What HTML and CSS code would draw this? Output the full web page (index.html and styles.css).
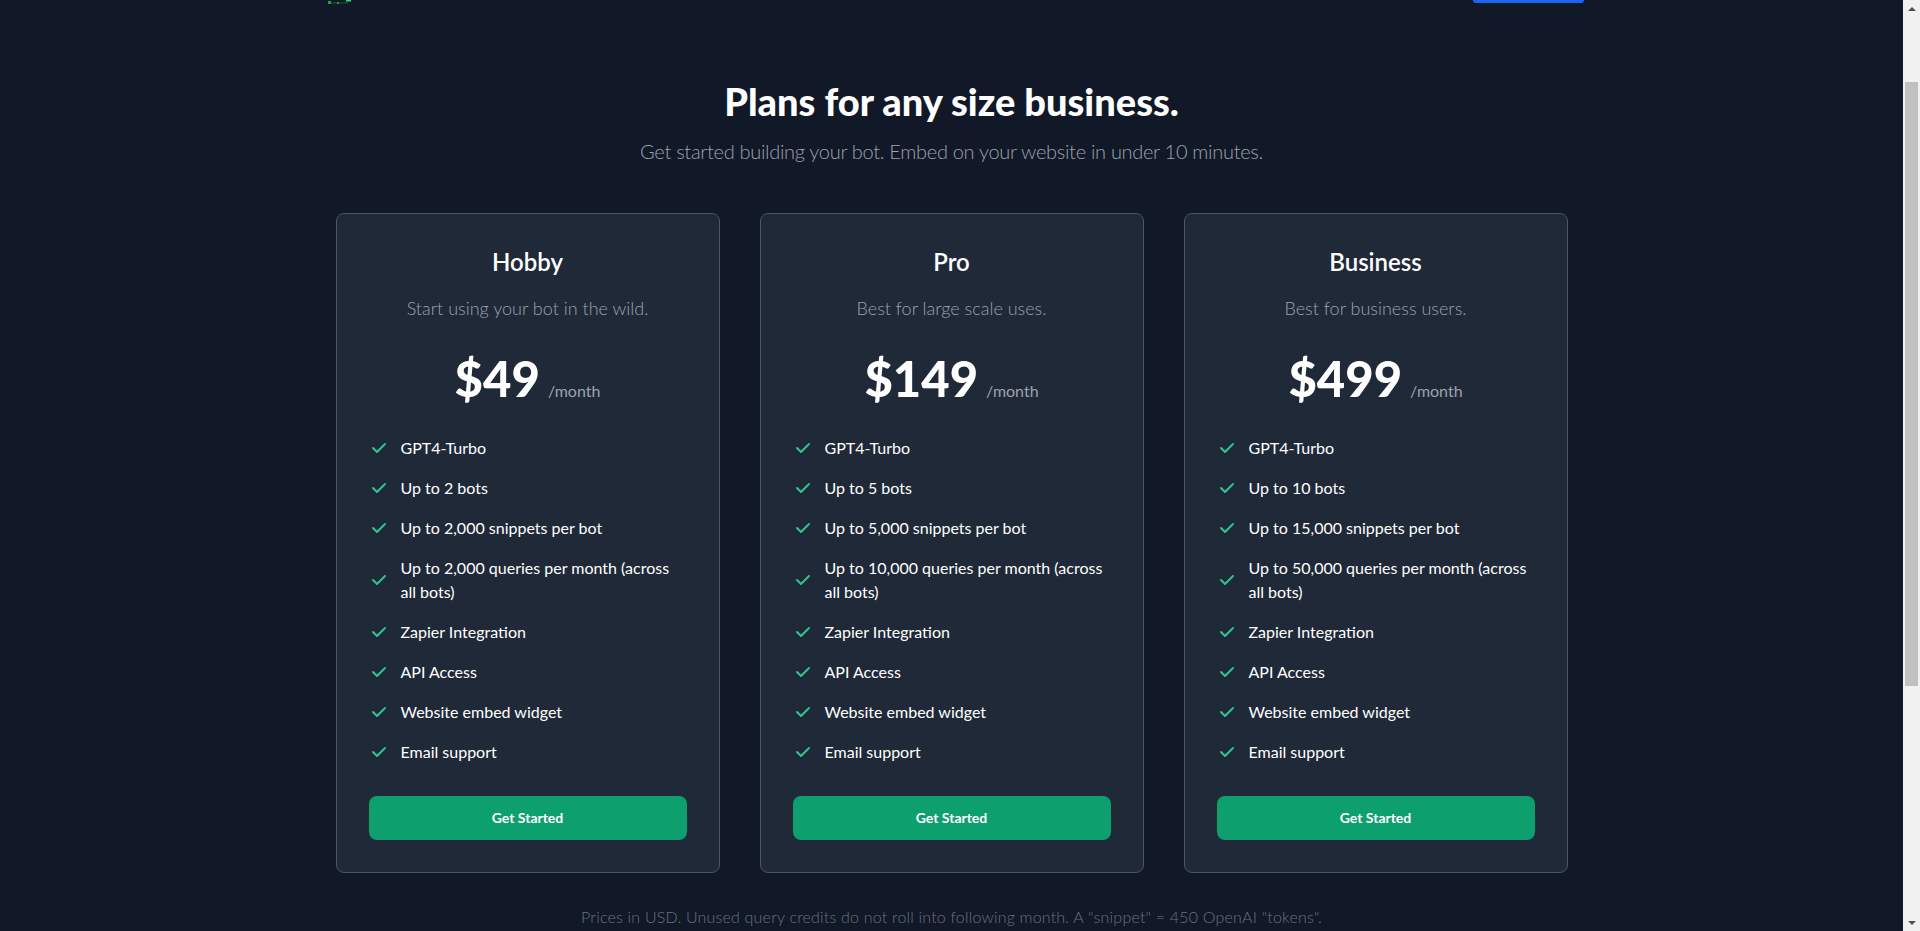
FILE: index.html
```html
<!DOCTYPE html>
<html lang="en">
<head>
<meta charset="utf-8">
<title>Pricing</title>
<link rel="stylesheet" href="styles.css">
</head>
<body>
<div class="page">
  <div class="viewport">
    <div class="topstrip">
      <svg class="logo-frag" width="26" height="5" viewBox="0 0 26 5">
        <rect x="0" y="1" width="3" height="3" fill="#16a34a"/>
        <path d="M3 3 L20 3" stroke="#1f5f3a" stroke-width="1"/>
        <rect x="9" y="2" width="2" height="2" fill="#2f8f4f"/>
        <rect x="18" y="0" width="5" height="1.5" fill="#22e06b"/>
      </svg>
      <div class="cta-frag"></div>
    </div>

    <section class="pricing">
      <div class="pricing-head">
        <h2 class="pricing-title">Plans for any size business.</h2>
        <p class="pricing-sub">Get started building your bot. Embed on your website in under 10 minutes.</p>
      </div>

      <div class="plans">
        <div class="plan">
          <h3 class="plan-name">Hobby</h3>
          <p class="plan-desc">Start using your bot in the wild.</p>
          <div class="plan-price"><span class="amount">$49</span><span class="per">/month</span></div>
          <ul class="features">
            <li><svg class="check" viewBox="0 0 20 20"><path fill-rule="evenodd" clip-rule="evenodd" d="M16.707 5.293a1 1 0 010 1.414l-8 8a1 1 0 01-1.414 0l-4-4a1 1 0 011.414-1.414L8 12.586l7.293-7.293a1 1 0 011.414 0z"/></svg><span>GPT4-Turbo</span></li>
            <li><svg class="check" viewBox="0 0 20 20"><path fill-rule="evenodd" clip-rule="evenodd" d="M16.707 5.293a1 1 0 010 1.414l-8 8a1 1 0 01-1.414 0l-4-4a1 1 0 011.414-1.414L8 12.586l7.293-7.293a1 1 0 011.414 0z"/></svg><span>Up to 2 bots</span></li>
            <li><svg class="check" viewBox="0 0 20 20"><path fill-rule="evenodd" clip-rule="evenodd" d="M16.707 5.293a1 1 0 010 1.414l-8 8a1 1 0 01-1.414 0l-4-4a1 1 0 011.414-1.414L8 12.586l7.293-7.293a1 1 0 011.414 0z"/></svg><span>Up to 2,000 snippets per bot</span></li>
            <li><svg class="check" viewBox="0 0 20 20"><path fill-rule="evenodd" clip-rule="evenodd" d="M16.707 5.293a1 1 0 010 1.414l-8 8a1 1 0 01-1.414 0l-4-4a1 1 0 011.414-1.414L8 12.586l7.293-7.293a1 1 0 011.414 0z"/></svg><span>Up to 2,000 queries per month (across all bots)</span></li>
            <li><svg class="check" viewBox="0 0 20 20"><path fill-rule="evenodd" clip-rule="evenodd" d="M16.707 5.293a1 1 0 010 1.414l-8 8a1 1 0 01-1.414 0l-4-4a1 1 0 011.414-1.414L8 12.586l7.293-7.293a1 1 0 011.414 0z"/></svg><span>Zapier Integration</span></li>
            <li><svg class="check" viewBox="0 0 20 20"><path fill-rule="evenodd" clip-rule="evenodd" d="M16.707 5.293a1 1 0 010 1.414l-8 8a1 1 0 01-1.414 0l-4-4a1 1 0 011.414-1.414L8 12.586l7.293-7.293a1 1 0 011.414 0z"/></svg><span>API Access</span></li>
            <li><svg class="check" viewBox="0 0 20 20"><path fill-rule="evenodd" clip-rule="evenodd" d="M16.707 5.293a1 1 0 010 1.414l-8 8a1 1 0 01-1.414 0l-4-4a1 1 0 011.414-1.414L8 12.586l7.293-7.293a1 1 0 011.414 0z"/></svg><span>Website embed widget</span></li>
            <li><svg class="check" viewBox="0 0 20 20"><path fill-rule="evenodd" clip-rule="evenodd" d="M16.707 5.293a1 1 0 010 1.414l-8 8a1 1 0 01-1.414 0l-4-4a1 1 0 011.414-1.414L8 12.586l7.293-7.293a1 1 0 011.414 0z"/></svg><span>Email support</span></li>
          </ul>
          <a class="plan-btn" href="#">Get Started</a>
        </div>

        <div class="plan">
          <h3 class="plan-name">Pro</h3>
          <p class="plan-desc">Best for large scale uses.</p>
          <div class="plan-price"><span class="amount">$149</span><span class="per">/month</span></div>
          <ul class="features">
            <li><svg class="check" viewBox="0 0 20 20"><path fill-rule="evenodd" clip-rule="evenodd" d="M16.707 5.293a1 1 0 010 1.414l-8 8a1 1 0 01-1.414 0l-4-4a1 1 0 011.414-1.414L8 12.586l7.293-7.293a1 1 0 011.414 0z"/></svg><span>GPT4-Turbo</span></li>
            <li><svg class="check" viewBox="0 0 20 20"><path fill-rule="evenodd" clip-rule="evenodd" d="M16.707 5.293a1 1 0 010 1.414l-8 8a1 1 0 01-1.414 0l-4-4a1 1 0 011.414-1.414L8 12.586l7.293-7.293a1 1 0 011.414 0z"/></svg><span>Up to 5 bots</span></li>
            <li><svg class="check" viewBox="0 0 20 20"><path fill-rule="evenodd" clip-rule="evenodd" d="M16.707 5.293a1 1 0 010 1.414l-8 8a1 1 0 01-1.414 0l-4-4a1 1 0 011.414-1.414L8 12.586l7.293-7.293a1 1 0 011.414 0z"/></svg><span>Up to 5,000 snippets per bot</span></li>
            <li><svg class="check" viewBox="0 0 20 20"><path fill-rule="evenodd" clip-rule="evenodd" d="M16.707 5.293a1 1 0 010 1.414l-8 8a1 1 0 01-1.414 0l-4-4a1 1 0 011.414-1.414L8 12.586l7.293-7.293a1 1 0 011.414 0z"/></svg><span>Up to 10,000 queries per month (across all bots)</span></li>
            <li><svg class="check" viewBox="0 0 20 20"><path fill-rule="evenodd" clip-rule="evenodd" d="M16.707 5.293a1 1 0 010 1.414l-8 8a1 1 0 01-1.414 0l-4-4a1 1 0 011.414-1.414L8 12.586l7.293-7.293a1 1 0 011.414 0z"/></svg><span>Zapier Integration</span></li>
            <li><svg class="check" viewBox="0 0 20 20"><path fill-rule="evenodd" clip-rule="evenodd" d="M16.707 5.293a1 1 0 010 1.414l-8 8a1 1 0 01-1.414 0l-4-4a1 1 0 011.414-1.414L8 12.586l7.293-7.293a1 1 0 011.414 0z"/></svg><span>API Access</span></li>
            <li><svg class="check" viewBox="0 0 20 20"><path fill-rule="evenodd" clip-rule="evenodd" d="M16.707 5.293a1 1 0 010 1.414l-8 8a1 1 0 01-1.414 0l-4-4a1 1 0 011.414-1.414L8 12.586l7.293-7.293a1 1 0 011.414 0z"/></svg><span>Website embed widget</span></li>
            <li><svg class="check" viewBox="0 0 20 20"><path fill-rule="evenodd" clip-rule="evenodd" d="M16.707 5.293a1 1 0 010 1.414l-8 8a1 1 0 01-1.414 0l-4-4a1 1 0 011.414-1.414L8 12.586l7.293-7.293a1 1 0 011.414 0z"/></svg><span>Email support</span></li>
          </ul>
          <a class="plan-btn" href="#">Get Started</a>
        </div>

        <div class="plan">
          <h3 class="plan-name">Business</h3>
          <p class="plan-desc">Best for business users.</p>
          <div class="plan-price"><span class="amount">$499</span><span class="per">/month</span></div>
          <ul class="features">
            <li><svg class="check" viewBox="0 0 20 20"><path fill-rule="evenodd" clip-rule="evenodd" d="M16.707 5.293a1 1 0 010 1.414l-8 8a1 1 0 01-1.414 0l-4-4a1 1 0 011.414-1.414L8 12.586l7.293-7.293a1 1 0 011.414 0z"/></svg><span>GPT4-Turbo</span></li>
            <li><svg class="check" viewBox="0 0 20 20"><path fill-rule="evenodd" clip-rule="evenodd" d="M16.707 5.293a1 1 0 010 1.414l-8 8a1 1 0 01-1.414 0l-4-4a1 1 0 011.414-1.414L8 12.586l7.293-7.293a1 1 0 011.414 0z"/></svg><span>Up to 10 bots</span></li>
            <li><svg class="check" viewBox="0 0 20 20"><path fill-rule="evenodd" clip-rule="evenodd" d="M16.707 5.293a1 1 0 010 1.414l-8 8a1 1 0 01-1.414 0l-4-4a1 1 0 011.414-1.414L8 12.586l7.293-7.293a1 1 0 011.414 0z"/></svg><span>Up to 15,000 snippets per bot</span></li>
            <li><svg class="check" viewBox="0 0 20 20"><path fill-rule="evenodd" clip-rule="evenodd" d="M16.707 5.293a1 1 0 010 1.414l-8 8a1 1 0 01-1.414 0l-4-4a1 1 0 011.414-1.414L8 12.586l7.293-7.293a1 1 0 011.414 0z"/></svg><span>Up to 50,000 queries per month (across all bots)</span></li>
            <li><svg class="check" viewBox="0 0 20 20"><path fill-rule="evenodd" clip-rule="evenodd" d="M16.707 5.293a1 1 0 010 1.414l-8 8a1 1 0 01-1.414 0l-4-4a1 1 0 011.414-1.414L8 12.586l7.293-7.293a1 1 0 011.414 0z"/></svg><span>Zapier Integration</span></li>
            <li><svg class="check" viewBox="0 0 20 20"><path fill-rule="evenodd" clip-rule="evenodd" d="M16.707 5.293a1 1 0 010 1.414l-8 8a1 1 0 01-1.414 0l-4-4a1 1 0 011.414-1.414L8 12.586l7.293-7.293a1 1 0 011.414 0z"/></svg><span>API Access</span></li>
            <li><svg class="check" viewBox="0 0 20 20"><path fill-rule="evenodd" clip-rule="evenodd" d="M16.707 5.293a1 1 0 010 1.414l-8 8a1 1 0 01-1.414 0l-4-4a1 1 0 011.414-1.414L8 12.586l7.293-7.293a1 1 0 011.414 0z"/></svg><span>Website embed widget</span></li>
            <li><svg class="check" viewBox="0 0 20 20"><path fill-rule="evenodd" clip-rule="evenodd" d="M16.707 5.293a1 1 0 010 1.414l-8 8a1 1 0 01-1.414 0l-4-4a1 1 0 011.414-1.414L8 12.586l7.293-7.293a1 1 0 011.414 0z"/></svg><span>Email support</span></li>
          </ul>
          <a class="plan-btn" href="#">Get Started</a>
        </div>
      </div>

      <p class="pricing-note">Prices in USD. Unused query credits do not roll into following month. A "snippet" = 450 OpenAI "tokens".</p>
    </section>
  </div>

  <div class="scrollbar">
    <div class="sb-arrow"><span class="tri-up"></span></div>
    <div class="sb-track"><div class="sb-thumb"></div></div>
    <div class="sb-arrow"><span class="tri-down"></span></div>
  </div>
</div>
</body>
</html>
```

FILE: styles.css
```css
* { box-sizing: border-box; }

html, body {
  margin: 0;
  padding: 0;
  height: 931px;
  overflow: hidden;
}

body {
  background: #111827;
  font-family: Lato, "Noto Sans", "DejaVu Sans", sans-serif;
  color: #ffffff;
  -webkit-font-smoothing: antialiased;
}

.page {
  display: flex;
  height: 931px;
}

.viewport {
  flex: 1;
  min-width: 0;
  display: flex;
  flex-direction: column;
}

/* bottom edge of the (scrolled away) navbar */
.topstrip {
  width: 100%;
  max-width: 1280px;
  margin: 0 auto;
  padding: 0 8px 0 16px;
  height: 4px;
  display: flex;
  justify-content: space-between;
  align-items: flex-start;
}

.logo-frag { display: block; }

.cta-frag {
  width: 111px;
  height: 3px;
  background: #1c64f2;
  border-radius: 0 0 6px 6px;
}

.pricing {
  width: 100%;
  max-width: 1280px;
  margin: 0 auto;
  padding: 77px 24px 0;
}

.pricing-head {
  text-align: center;
  margin-bottom: 48px;
}

.pricing-title {
  margin: 0 0 16px;
  font-size: 38px;
  line-height: 40px;
  font-weight: 900;
  letter-spacing: 0;
  color: #ffffff;
}

.pricing-sub {
  margin: 0;
  font-size: 20px;
  line-height: 28px;
  font-weight: 300;
  letter-spacing: -0.3px;
  color: #9ca3af;
}

.plans {
  display: grid;
  grid-template-columns: repeat(3, 1fr);
  gap: 40px;
}

.plan {
  display: flex;
  flex-direction: column;
  padding: 32px;
  text-align: center;
  background: #1f2937;
  border: 1px solid #4b5563;
  border-radius: 8px;
}

.plan-name {
  margin: 0 0 16px;
  font-size: 24px;
  line-height: 32px;
  font-weight: 600;
}

.plan-desc {
  margin: 0;
  font-size: 18px;
  line-height: 28px;
  font-weight: 300;
  color: #9ca3af;
}

.plan-price {
  display: flex;
  justify-content: center;
  align-items: baseline;
  margin: 32px 0;
  height: 50px;
}

.amount {
  margin-right: 8px;
  font-size: 49px;
  line-height: 48px;
  font-weight: 900;
}

.per {
  font-size: 16px;
  line-height: 24px;
  color: #9ca3af;
}

.features {
  list-style: none;
  margin: 0 0 32px;
  padding: 0;
  text-align: left;
  display: flex;
  flex-direction: column;
  gap: 16px;
}

.features li {
  display: flex;
  align-items: center;
  gap: 12px;
  font-size: 16px;
  line-height: 24px;
}

.check {
  flex-shrink: 0;
  width: 20px;
  height: 20px;
  fill: #31c48d;
}

.plan-btn {
  display: block;
  padding: 12px 20px;
  background: #0e9f6e;
  color: #ffffff;
  font-size: 14px;
  line-height: 20px;
  font-weight: 700;
  text-align: center;
  text-decoration: none;
  border-radius: 8px;
}

.pricing-note {
  margin: 32px 0 0;
  text-align: center;
  font-size: 16px;
  line-height: 24px;
  font-weight: 300;
  letter-spacing: 0.2px;
  color: #6b7280;
}

/* classic window scrollbar */
.scrollbar {
  width: 17px;
  flex-shrink: 0;
  background: #f1f1f1;
  display: flex;
  flex-direction: column;
}

.sb-arrow {
  height: 17px;
  display: flex;
  align-items: center;
  justify-content: center;
}

.tri-up, .tri-down {
  width: 0;
  height: 0;
  border-left: 4px solid transparent;
  border-right: 4px solid transparent;
}

.tri-up { border-bottom: 4px solid #505050; }
.tri-down { border-top: 4px solid #505050; }

.sb-track {
  flex: 1;
  padding: 65px 2px 0;
}

.sb-thumb {
  height: 604px;
  background: #c1c1c1;
}
```
